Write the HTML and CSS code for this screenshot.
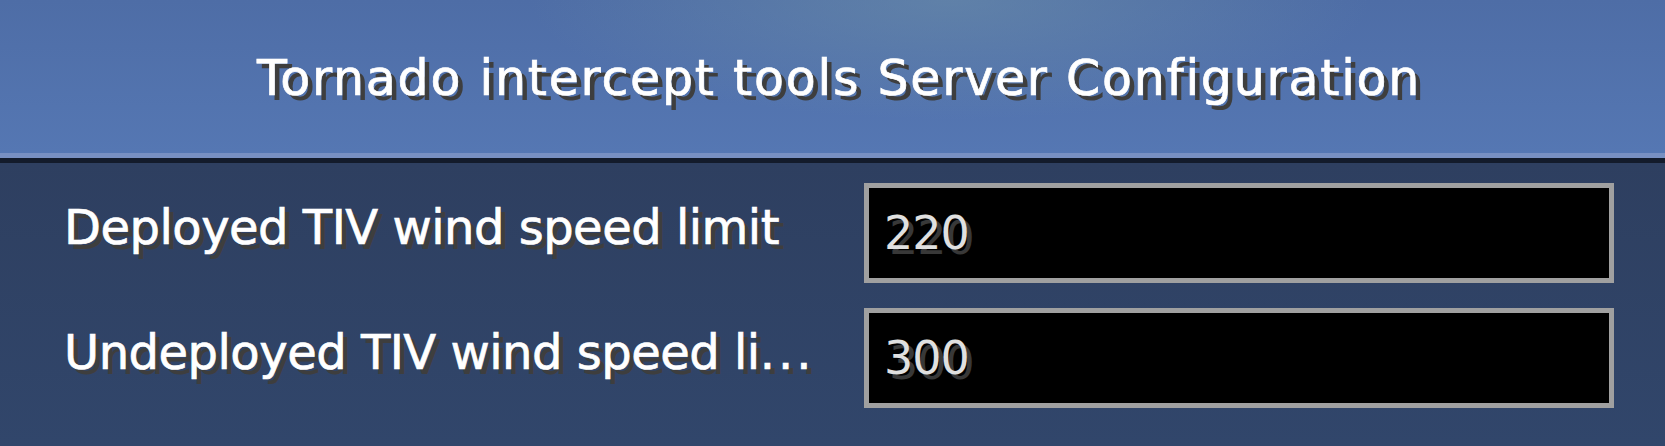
FILE: index.html
```html
<!DOCTYPE html>
<html lang="en">

<head>
    <meta charset="UTF-8">
    <meta name="viewport" content="width=device-width, initial-scale=1.0">
    <title>Server Configuration</title>
    <link rel="stylesheet" href="styles.css">
</head>

<body>
    <div class="pantalla">
        <header class="cabecera">
            <h1 class="titulo">Tornado intercept tools Server Configuration</h1>
        </header>

        <main class="opciones">
            <div class="opcion">
                <label class="etiqueta" for="deployed">Deployed TIV wind speed limit</label>
                <input class="campo" id="deployed" type="text" value="220">
            </div>
            <div class="opcion">
                <label class="etiqueta" for="undeployed">Undeployed TIV wind speed li<span class="puntos">...</span></label>
                <input class="campo" id="undeployed" type="text" value="300">
            </div>
        </main>
    </div>
</body>

</html>
```

FILE: styles.css
```css
html,
body {
    margin: 0;
    height: 100%;
    background: #2f4264;
    overflow: hidden;
}

.pantalla {
    height: 446px;
    display: flex;
    flex-direction: column;
    font-family: 'DejaVu Sans', sans-serif;
    color: white;
}

/* barra de arriba con el titulo */
.cabecera {
    box-sizing: border-box;
    height: 158px;
    padding: 3px 0 0 13px;
    border-bottom: 5px solid #7890c2;
    display: flex;
    align-items: center;
    justify-content: center;
    background:
        radial-gradient(ellipse 420px 120px at 950px 0, rgba(110, 145, 170, 0.55), rgba(110, 145, 170, 0)),
        linear-gradient(to bottom, #4e6da6, #5577b3);
}

.titulo {
    margin: 0;
    font-size: 49px;
    font-weight: normal;
    line-height: 49px;
    letter-spacing: 1.75px;
    -webkit-text-stroke: 0.7px white;
    text-shadow: 5px 5px 0 #3e3e3e;
    white-space: nowrap;
}

/* lista de opciones */
.opciones {
    flex: 1;
    border-top: 5px solid #131b2b;
    padding: 20px 0 0 64px;
    display: flex;
    flex-direction: column;
    gap: 25px;
    background: linear-gradient(to bottom, #2e3f60, #31466b);
}

.opcion {
    display: flex;
    align-items: center;
}

.etiqueta {
    flex: 0 0 800px;
    padding-bottom: 13px;
    font-size: 48px;
    line-height: 48px;
    letter-spacing: -0.5px;
    -webkit-text-stroke: 0.7px white;
    text-shadow: 5px 5px 0 #3e3e3e;
    white-space: nowrap;
}

.puntos {
    letter-spacing: 3px;
}

.campo {
    box-sizing: border-box;
    width: 750px;
    height: 100px;
    margin: 0;
    padding: 0 15px;
    border: 5px solid #a0a0a0;
    border-radius: 0;
    background: black;
    color: #e0e0e0;
    font-family: 'DejaVu Sans', sans-serif;
    font-size: 46px;
    letter-spacing: -1px;
    text-shadow: 5px 5px 0 #383838;
    outline: none;
}
```
